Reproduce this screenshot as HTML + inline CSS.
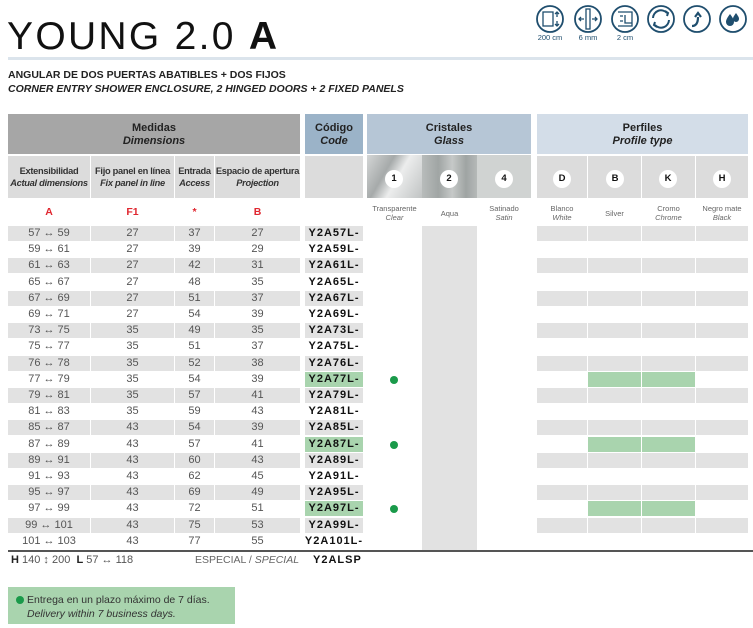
<!DOCTYPE html>
<html><head><meta charset="utf-8">
<style>
*{margin:0;padding:0;box-sizing:border-box}
body{width:753px;height:628px;background:#fff;font-family:"Liberation Sans",sans-serif;position:relative;overflow:hidden;color:#222}
.a{position:absolute}
.t{position:absolute;left:7px;top:14px;font-size:39px;letter-spacing:2.3px;color:#111;font-weight:normal;line-height:46px}
.sub{position:absolute;left:8px;font-size:10.5px;font-weight:bold;color:#222}
.hd{position:absolute;text-align:center;font-size:11px;line-height:13px;font-weight:bold;color:#222}
.hd i{font-weight:bold}
.sh{position:absolute;background:#dcdcdc;top:156px;height:42px;text-align:center;font-size:9.3px;font-weight:bold;line-height:12px;padding-top:9px;color:#333;letter-spacing:-.3px}
.lab{position:absolute;top:206px;font-size:10.5px;font-weight:bold;color:#e0262f;text-align:center}
.gl{position:absolute;top:204px;font-size:7.5px;color:#666;text-align:center;line-height:9px}
.num{position:absolute;top:170px;width:18px;height:18px;border-radius:50%;background:#fff;font-size:9.5px;font-weight:bold;text-align:center;line-height:18px;color:#111}
.r{position:absolute;left:0;width:753px;height:16.2px}
.c{position:absolute;top:0;height:15px;text-align:center;font-size:11px;line-height:15px;color:#555}
.g .c.bg{background:#e2e2e2}
.code{font-weight:bold;color:#111;letter-spacing:1px;font-size:11px}
.gr{background:#a9d4ae!important}
.dot{position:absolute;width:8px;height:8px;border-radius:50%;background:#1a9a4a}
.ic{position:absolute;top:4px}
.icl{position:absolute;top:33px;font-size:7.5px;color:#1f4e6e;text-align:center;width:40px}
</style></head><body>
<div class="t">YOUNG 2.0 <b>A</b></div>
<div class="a" style="left:8px;top:57px;width:745px;height:3px;background:#dbe4ec"></div>
<div class="sub" style="top:69px">ANGULAR DE DOS PUERTAS ABATIBLES + DOS FIJOS</div>
<div class="sub" style="top:83px"><i>CORNER ENTRY SHOWER ENCLOSURE, 2 HINGED DOORS + 2 FIXED PANELS</i></div>

<svg class="ic" style="left:535px" width="214" height="30" viewBox="0 0 214 30" fill="none" stroke="#1f4e6e" stroke-width="1.8">
<circle cx="15" cy="15" r="13"/><rect x="8" y="8" width="10" height="14" stroke-width="1.3"/><path d="M22 8v5M22 17v5M20 10l2-2 2 2M20 20l2 2 2-2" stroke-width="1.3"/>
<circle cx="53" cy="15" r="13"/><rect x="51" y="5" width="4" height="20" stroke-width="1.3"/><path d="M44 15h5M62 15h-5M46 13l-2 2 2 2M60 13l2 2-2 2" stroke-width="1.3"/>
<circle cx="90" cy="15" r="13"/><path d="M83 8h14v14h-14M90 11v8h7M85 12h3M85 17h3" stroke-width="1.3"/>
<circle cx="126" cy="15" r="13"/><path d="M118 14a8 8 0 0 1 14-5M134 16a8 8 0 0 1-14 5M130 7l3 2-1 3M122 23l-3-2 1-3" stroke-width="2"/>
<circle cx="162" cy="15" r="13"/><path d="M157 22c4 0 6-3 6-9M160 13l3-4 3 4" stroke-width="2.2"/>
<circle cx="198" cy="15" r="13"/><path d="M195 10c-3 4-4 6-4 8a4 4 0 0 0 8 0c0-2-1-4-4-8zM201 9c-2 3-3 4-3 6a3 3 0 0 0 6 0c0-2-1-3-3-6z" fill="#1f4e6e" stroke="none"/>
</svg>
<div class="icl" style="left:530px">200 cm</div>
<div class="icl" style="left:568px">6 mm</div>
<div class="icl" style="left:605px">2 cm</div>

<div class="hd" style="left:8px;top:114px;width:292px;height:40px;background:#a6a6a6;padding-top:8px">Medidas<br><i>Dimensions</i></div>
<div class="hd" style="left:305px;top:114px;width:58px;height:40px;background:#9bb3c8;padding-top:8px">Código<br><i>Code</i></div>
<div class="hd" style="left:367px;top:114px;width:164px;height:40px;background:#b6c6d6;padding-top:8px">Cristales<br><i>Glass</i></div>
<div class="hd" style="left:537px;top:114px;width:211px;height:40px;background:#d3dde8;padding-top:8px">Perfiles<br><i>Profile type</i></div>

<div class="sh" style="left:8px;width:82px">Extensibilidad<br><i>Actual dimensions</i></div>
<div class="sh" style="left:91px;width:83px">Fijo panel en línea<br><i>Fix panel in line</i></div>
<div class="sh" style="left:175px;width:39px">Entrada<br><i>Access</i></div>
<div class="sh" style="left:215px;width:85px">Espacio de apertura<br><i>Projection</i></div>
<div class="sh" style="left:305px;width:58px"></div>
<div class="a" style="left:367px;top:155px;width:55px;height:43px;background:linear-gradient(120deg,#d4d6d6 0%,#a6aaaa 35%,#eceded 55%,#c0c3c3 100%)"></div>
<div class="a" style="left:422px;top:155px;width:55px;height:43px;background:linear-gradient(90deg,#b8bcbb,#a0a5a4 30%,#c6c9c8 55%,#9fa4a3 80%,#b5b9b8)"></div>
<div class="a" style="left:477px;top:155px;width:54px;height:43px;background:#d0d3d2"></div>
<div class="sh" style="left:537px;width:50px"></div>
<div class="sh" style="left:588px;width:53px"></div>
<div class="sh" style="left:642px;width:53px"></div>
<div class="sh" style="left:696px;width:52px"></div>
<div class="num" style="left:385px">1</div>
<div class="num" style="left:440px">2</div>
<div class="num" style="left:495px">4</div>
<div class="num" style="left:553px">D</div>
<div class="num" style="left:606px">B</div>
<div class="num" style="left:659px">K</div>
<div class="num" style="left:713px">H</div>

<div class="lab" style="left:8px;width:82px">A</div>
<div class="lab" style="left:91px;width:83px">F1</div>
<div class="lab" style="left:175px;width:39px">*</div>
<div class="lab" style="left:215px;width:85px">B</div>
<div class="gl" style="left:367px;width:55px">Transparente<br><i>Clear</i></div>
<div class="gl" style="left:422px;width:55px;top:209px">Aqua</div>
<div class="gl" style="left:477px;width:54px">Satinado<br><i>Satin</i></div>
<div class="gl" style="left:537px;width:50px">Blanco<br><i>White</i></div>
<div class="gl" style="left:588px;width:53px;top:209px">Silver</div>
<div class="gl" style="left:642px;width:53px">Cromo<br><i>Chrome</i></div>
<div class="gl" style="left:696px;width:52px">Negro mate<br><i>Black</i></div>

<div class="a" style="left:422px;top:226px;width:55px;height:324px;background:#e2e2e2"></div>

<div id="rows">
<div class="r g" style="top:226px"><div class="c bg" style="left:8px;width:82px">57 ↔ 59</div><div class="c bg" style="left:91px;width:83px">27</div><div class="c bg" style="left:175px;width:39px">37</div><div class="c bg" style="left:215px;width:85px">27</div><div class="c bg code" style="left:305px;width:58px">Y2A57L-</div><div class="c bg" style="left:537px;width:50px"></div><div class="c bg" style="left:588px;width:53px"></div><div class="c bg" style="left:642px;width:53px"></div><div class="c bg" style="left:696px;width:52px"></div></div>
<div class="r" style="top:242.2px"><div class="c" style="left:8px;width:82px">59 ↔ 61</div><div class="c" style="left:91px;width:83px">27</div><div class="c" style="left:175px;width:39px">39</div><div class="c" style="left:215px;width:85px">29</div><div class="c code" style="left:305px;width:58px">Y2A59L-</div></div>
<div class="r g" style="top:258.4px"><div class="c bg" style="left:8px;width:82px">61 ↔ 63</div><div class="c bg" style="left:91px;width:83px">27</div><div class="c bg" style="left:175px;width:39px">42</div><div class="c bg" style="left:215px;width:85px">31</div><div class="c bg code" style="left:305px;width:58px">Y2A61L-</div><div class="c bg" style="left:537px;width:50px"></div><div class="c bg" style="left:588px;width:53px"></div><div class="c bg" style="left:642px;width:53px"></div><div class="c bg" style="left:696px;width:52px"></div></div>
<div class="r" style="top:274.6px"><div class="c" style="left:8px;width:82px">65 ↔ 67</div><div class="c" style="left:91px;width:83px">27</div><div class="c" style="left:175px;width:39px">48</div><div class="c" style="left:215px;width:85px">35</div><div class="c code" style="left:305px;width:58px">Y2A65L-</div></div>
<div class="r g" style="top:290.8px"><div class="c bg" style="left:8px;width:82px">67 ↔ 69</div><div class="c bg" style="left:91px;width:83px">27</div><div class="c bg" style="left:175px;width:39px">51</div><div class="c bg" style="left:215px;width:85px">37</div><div class="c bg code" style="left:305px;width:58px">Y2A67L-</div><div class="c bg" style="left:537px;width:50px"></div><div class="c bg" style="left:588px;width:53px"></div><div class="c bg" style="left:642px;width:53px"></div><div class="c bg" style="left:696px;width:52px"></div></div>
<div class="r" style="top:307px"><div class="c" style="left:8px;width:82px">69 ↔ 71</div><div class="c" style="left:91px;width:83px">27</div><div class="c" style="left:175px;width:39px">54</div><div class="c" style="left:215px;width:85px">39</div><div class="c code" style="left:305px;width:58px">Y2A69L-</div></div>
<div class="r g" style="top:323.2px"><div class="c bg" style="left:8px;width:82px">73 ↔ 75</div><div class="c bg" style="left:91px;width:83px">35</div><div class="c bg" style="left:175px;width:39px">49</div><div class="c bg" style="left:215px;width:85px">35</div><div class="c bg code" style="left:305px;width:58px">Y2A73L-</div><div class="c bg" style="left:537px;width:50px"></div><div class="c bg" style="left:588px;width:53px"></div><div class="c bg" style="left:642px;width:53px"></div><div class="c bg" style="left:696px;width:52px"></div></div>
<div class="r" style="top:339.4px"><div class="c" style="left:8px;width:82px">75 ↔ 77</div><div class="c" style="left:91px;width:83px">35</div><div class="c" style="left:175px;width:39px">51</div><div class="c" style="left:215px;width:85px">37</div><div class="c code" style="left:305px;width:58px">Y2A75L-</div></div>
<div class="r g" style="top:355.6px"><div class="c bg" style="left:8px;width:82px">76 ↔ 78</div><div class="c bg" style="left:91px;width:83px">35</div><div class="c bg" style="left:175px;width:39px">52</div><div class="c bg" style="left:215px;width:85px">38</div><div class="c bg code" style="left:305px;width:58px">Y2A76L-</div><div class="c bg" style="left:537px;width:50px"></div><div class="c bg" style="left:588px;width:53px"></div><div class="c bg" style="left:642px;width:53px"></div><div class="c bg" style="left:696px;width:52px"></div></div>
<div class="r" style="top:371.8px"><div class="c" style="left:8px;width:82px">77 ↔ 79</div><div class="c" style="left:91px;width:83px">35</div><div class="c" style="left:175px;width:39px">54</div><div class="c" style="left:215px;width:85px">39</div><div class="c code gr" style="left:305px;width:58px">Y2A77L-</div><div class="dot" style="left:390px;top:4px"></div><div class="c gr" style="left:588px;width:53px"></div><div class="c gr" style="left:642px;width:53px"></div></div>
<div class="r g" style="top:388px"><div class="c bg" style="left:8px;width:82px">79 ↔ 81</div><div class="c bg" style="left:91px;width:83px">35</div><div class="c bg" style="left:175px;width:39px">57</div><div class="c bg" style="left:215px;width:85px">41</div><div class="c bg code" style="left:305px;width:58px">Y2A79L-</div><div class="c bg" style="left:537px;width:50px"></div><div class="c bg" style="left:588px;width:53px"></div><div class="c bg" style="left:642px;width:53px"></div><div class="c bg" style="left:696px;width:52px"></div></div>
<div class="r" style="top:404.2px"><div class="c" style="left:8px;width:82px">81 ↔ 83</div><div class="c" style="left:91px;width:83px">35</div><div class="c" style="left:175px;width:39px">59</div><div class="c" style="left:215px;width:85px">43</div><div class="c code" style="left:305px;width:58px">Y2A81L-</div></div>
<div class="r g" style="top:420.4px"><div class="c bg" style="left:8px;width:82px">85 ↔ 87</div><div class="c bg" style="left:91px;width:83px">43</div><div class="c bg" style="left:175px;width:39px">54</div><div class="c bg" style="left:215px;width:85px">39</div><div class="c bg code" style="left:305px;width:58px">Y2A85L-</div><div class="c bg" style="left:537px;width:50px"></div><div class="c bg" style="left:588px;width:53px"></div><div class="c bg" style="left:642px;width:53px"></div><div class="c bg" style="left:696px;width:52px"></div></div>
<div class="r" style="top:436.6px"><div class="c" style="left:8px;width:82px">87 ↔ 89</div><div class="c" style="left:91px;width:83px">43</div><div class="c" style="left:175px;width:39px">57</div><div class="c" style="left:215px;width:85px">41</div><div class="c code gr" style="left:305px;width:58px">Y2A87L-</div><div class="dot" style="left:390px;top:4px"></div><div class="c gr" style="left:588px;width:53px"></div><div class="c gr" style="left:642px;width:53px"></div></div>
<div class="r g" style="top:452.8px"><div class="c bg" style="left:8px;width:82px">89 ↔ 91</div><div class="c bg" style="left:91px;width:83px">43</div><div class="c bg" style="left:175px;width:39px">60</div><div class="c bg" style="left:215px;width:85px">43</div><div class="c bg code" style="left:305px;width:58px">Y2A89L-</div><div class="c bg" style="left:537px;width:50px"></div><div class="c bg" style="left:588px;width:53px"></div><div class="c bg" style="left:642px;width:53px"></div><div class="c bg" style="left:696px;width:52px"></div></div>
<div class="r" style="top:469px"><div class="c" style="left:8px;width:82px">91 ↔ 93</div><div class="c" style="left:91px;width:83px">43</div><div class="c" style="left:175px;width:39px">62</div><div class="c" style="left:215px;width:85px">45</div><div class="c code" style="left:305px;width:58px">Y2A91L-</div></div>
<div class="r g" style="top:485.2px"><div class="c bg" style="left:8px;width:82px">95 ↔ 97</div><div class="c bg" style="left:91px;width:83px">43</div><div class="c bg" style="left:175px;width:39px">69</div><div class="c bg" style="left:215px;width:85px">49</div><div class="c bg code" style="left:305px;width:58px">Y2A95L-</div><div class="c bg" style="left:537px;width:50px"></div><div class="c bg" style="left:588px;width:53px"></div><div class="c bg" style="left:642px;width:53px"></div><div class="c bg" style="left:696px;width:52px"></div></div>
<div class="r" style="top:501.4px"><div class="c" style="left:8px;width:82px">97 ↔ 99</div><div class="c" style="left:91px;width:83px">43</div><div class="c" style="left:175px;width:39px">72</div><div class="c" style="left:215px;width:85px">51</div><div class="c code gr" style="left:305px;width:58px">Y2A97L-</div><div class="dot" style="left:390px;top:4px"></div><div class="c gr" style="left:588px;width:53px"></div><div class="c gr" style="left:642px;width:53px"></div></div>
<div class="r g" style="top:517.6px"><div class="c bg" style="left:8px;width:82px">99 ↔ 101</div><div class="c bg" style="left:91px;width:83px">43</div><div class="c bg" style="left:175px;width:39px">75</div><div class="c bg" style="left:215px;width:85px">53</div><div class="c bg code" style="left:305px;width:58px">Y2A99L-</div><div class="c bg" style="left:537px;width:50px"></div><div class="c bg" style="left:588px;width:53px"></div><div class="c bg" style="left:642px;width:53px"></div><div class="c bg" style="left:696px;width:52px"></div></div>
<div class="r" style="top:533.8px"><div class="c" style="left:8px;width:82px">101 ↔ 103</div><div class="c" style="left:91px;width:83px">43</div><div class="c" style="left:175px;width:39px">77</div><div class="c" style="left:215px;width:85px">55</div><div class="c code" style="left:300px;width:68px">Y2A101L-</div></div>
</div>

<div class="a" style="left:8px;top:550px;width:745px;height:1.5px;background:#555"></div>
<div class="a" style="left:11px;top:553px;font-size:11px;color:#555;line-height:14px"><b style="color:#222">H</b> 140 ↕ 200 &nbsp;<b style="color:#222">L</b> 57 ↔ 118</div>
<div class="a" style="left:195px;top:553px;font-size:10.5px;color:#666;line-height:14px">ESPECIAL / <i>SPECIAL</i></div>
<div class="a code" style="left:313px;top:553px;line-height:14px">Y2ALSP</div>

<div class="a" style="left:8px;top:587px;width:227px;height:37px;background:#a9d4ae"></div>
<div class="dot" style="left:16px;top:596px"></div>
<div class="a" style="left:27px;top:593px;font-size:10.5px;color:#333;line-height:14px">Entrega en un plazo máximo de 7 días.<br><i>Delivery within 7 business days.</i></div>
</body></html>
